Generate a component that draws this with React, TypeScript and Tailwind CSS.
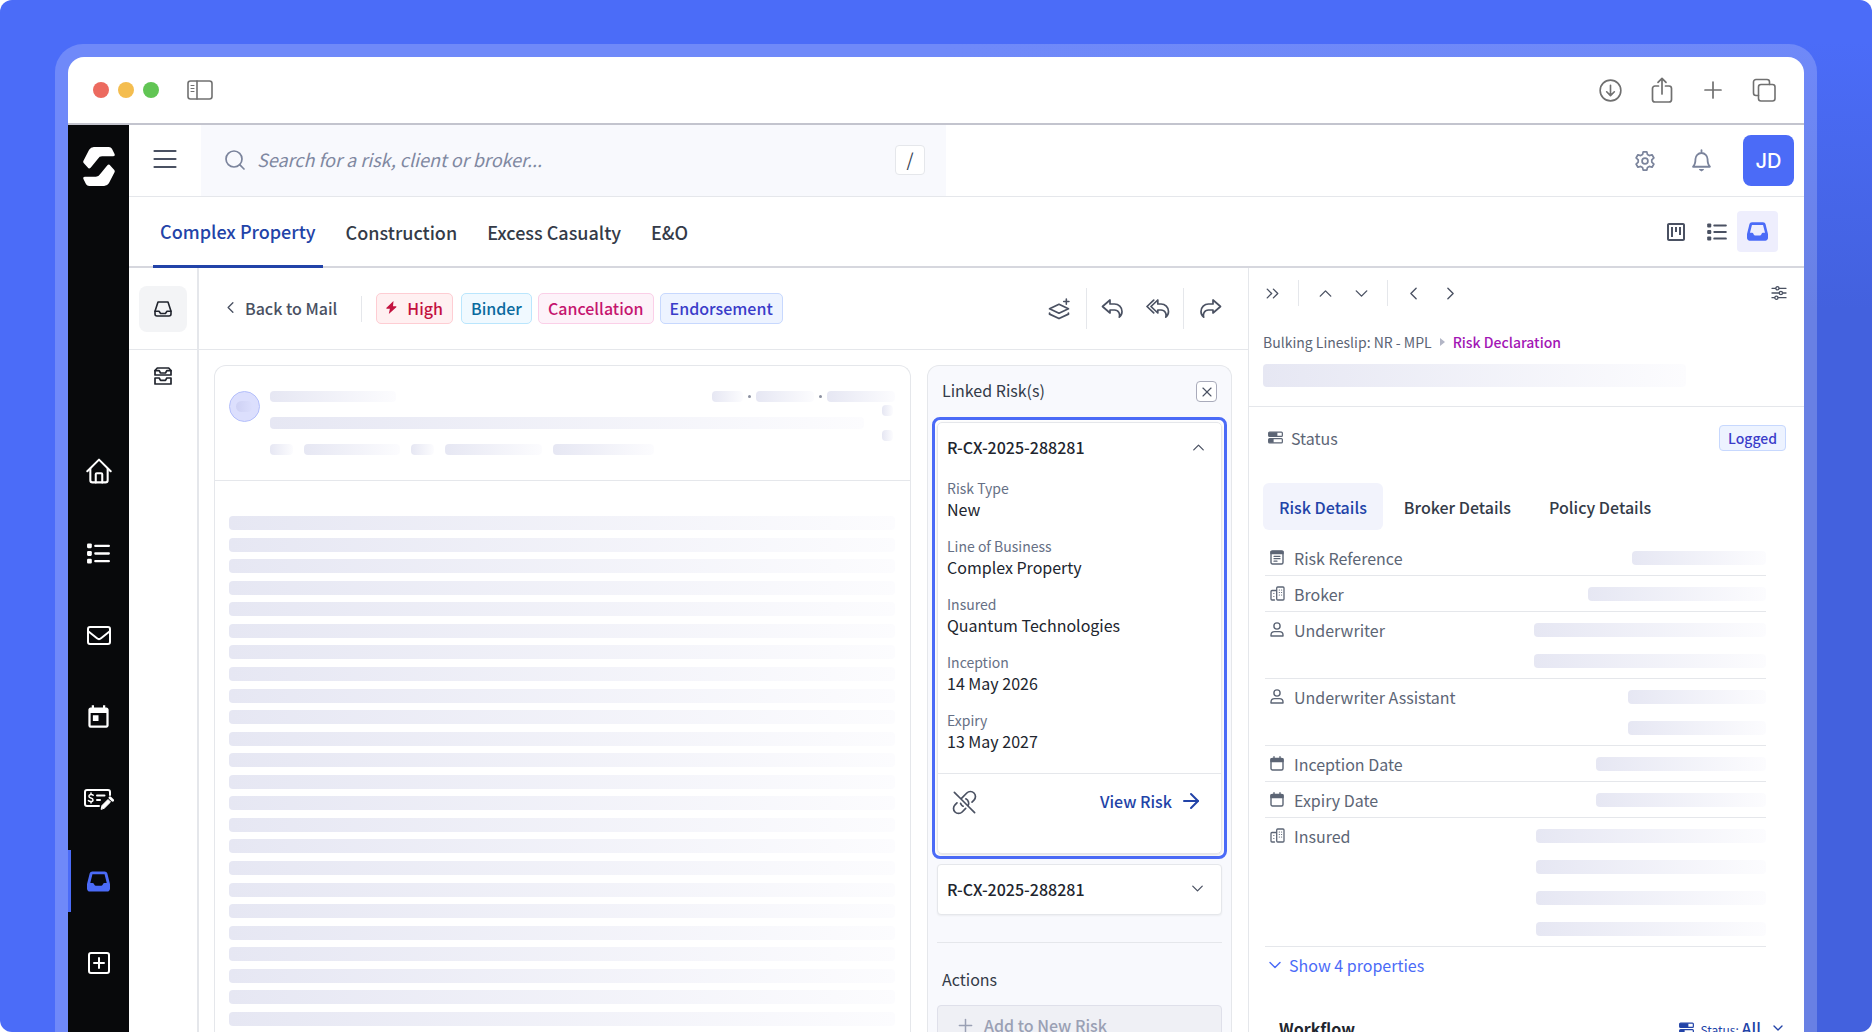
import React from "react";
import type { ReactNode } from "react";
import { FaInbox } from "react-icons/fa6";
import { HiOutlineLinkSlash } from "react-icons/hi2";
import { MdOutlineViewKanban, MdToday } from "react-icons/md";
import {
  ArrowRight,
  ChevronDown,
  ChevronLeft,
  ChevronRight,
  ChevronUp,
  ChevronsRight,
  Plus,
  Search,
  X,
} from "lucide-react";

type IconProps = { className?: string };

function Svg({ className, box = "0 0 24 24", children, sw = 2 }: IconProps & { box?: string; children: ReactNode; sw?: number }) {
  return (
    <svg className={className} viewBox={box} fill="none" stroke="currentColor" strokeWidth={sw} strokeLinecap="round" strokeLinejoin="round" aria-hidden="true">
      {children}
    </svg>
  );
}

const Logo = ({ className }: IconProps) => (
  <svg className={className} viewBox="0 0 94 114" fill="currentColor" aria-hidden="true">
    <path d="M1 41 18 8Q23 0 32 0H76Q82 0 85 5L92 19Q96 27 88 27H56Q48 27 44 34L23 60Q18 66 14 60L2 47Q0 44 1 41Z" />
    <path transform="rotate(180 47 57)" d="M1 41 18 8Q23 0 32 0H76Q82 0 85 5L92 19Q96 27 88 27H56Q48 27 44 34L23 60Q18 66 14 60L2 47Q0 44 1 41Z" />
  </svg>
);

const WindowPanel = ({ className }: IconProps) => (
  <Svg className={className} box="0 0 26 20" sw={1.6}>
    <rect x="1" y="1" width="24" height="18" rx="2.5" />
    <path d="M10 1v18" />
    <path d="M4 5.5h3M4 8.5h3M4 11.5h3" strokeWidth={1.1} />
  </Svg>
);
const DownloadCircle = ({ className }: IconProps) => (
  <Svg className={className} sw={1.7}>
    <circle cx="12" cy="12" r="10.8" />
    <path d="M12 6.5v10.5M8 13.3l4 4 4-4" />
  </Svg>
);
const Share = ({ className }: IconProps) => (
  <Svg className={className} box="0 0 22 26" sw={1.7}>
    <path d="M7.5 9H4a2.5 2.5 0 0 0-2.500 2.500v11A2.500 2.500 0 0 0 4 25h14a2.500 2.500 0 0 0 2.500-2.500v-11A2.500 2.500 0 0 0 18 9h-3.500" />
    <path d="M11 17V1.500M7 5.300l4-4 4 4" />
  </Svg>
);
const Copies = ({ className }: IconProps) => (
  <Svg className={className} sw={1.6}>
    <rect x="6.500" y="6.500" width="16.500" height="16.500" rx="2.500" />
    <path d="M6.500 17.500H4A2.500 2.500 0 0 1 1.500 15V4A2.500 2.500 0 0 1 4 1.500h11A2.500 2.500 0 0 1 17.500 4v2.500" />
  </Svg>
);
const Gear = ({ className }: IconProps) => (
  <Svg className={className} sw={1.9}>
    <circle cx="12" cy="12" r="3.2" />
    <path d="M10 2h4l.7 3 2 1.100 3-.9 2 3.500-2.300 2.100v2.400l2.300 2.100-2 3.500-3-.9-2 1.100-.7 3h-4l-.7-3-2-1.100-3 .9-2-3.500 2.300-2.100v-2.400L2.300 8.700l2-3.500 3 .9 2-1.100z" />
  </Svg>
);
const BellIcon = ({ className }: IconProps) => (
  <Svg className={className} sw={1.9}>
    <path d="M12 1.200v1.500M3.200 18.500c1.700-1.700 2.500-3.400 2.500-8a6.300 6.300 0 0 1 12.600 0c0 4.600.8 6.300 2.500 8z" />
    <path d="M10 21.500h4l-2 1.300z" fill="currentColor" strokeWidth={1.200} />
  </Svg>
);
const Home = ({ className }: IconProps) => (
  <Svg className={className} sw={1.9}>
    <path d="M1.200 12.200 12 1.500l10.800 10.700" />
    <path d="M4 10v10.500A2 2 0 0 0 6 22.500h12a2 2 0 0 0 2-2V10" />
    <path d="M9 22.500V15a1 1 0 0 1 1-1h4a1 1 0 0 1 1 1v7.500" />
  </Svg>
);
const List = ({ className }: IconProps) => (
  <svg className={className} viewBox="0 0 24 22" fill="currentColor" aria-hidden="true">
    <rect x="0" y="0.5" width="5" height="5" rx="1.2" />
    <rect x="0" y="8.5" width="5" height="5" rx="1.2" />
    <rect x="0" y="16.5" width="5" height="5" rx="1.2" />
    <rect x="7.5" y="1.8" width="16.5" height="2.4" rx="1.1" />
    <rect x="7.5" y="9.8" width="16.5" height="2.4" rx="1.1" />
    <rect x="7.5" y="17.8" width="16.5" height="2.4" rx="1.1" />
  </svg>
);
const Mail = ({ className }: IconProps) => (
  <Svg className={className} box="0 0 24 19">
    <rect x="1" y="1" width="22" height="17" rx="2" />
    <path d="M1.500 5.500 10 12.300a3.200 3.200 0 0 0 4 0l8.500-6.800" />
  </Svg>
);
const CheckPen = ({ className }: IconProps) => (
  <Svg className={className} box="0 0 30 21">
    <path d="M15 17H3a2 2 0 0 1-2-2V3a2 2 0 0 1 2-2h21a2 2 0 0 1 2 2v3" />
    <path d="M13 6.500h7.500M13 11h3" />
    <path d="M9.200 6.300C8.600 5.600 7.800 5.300 7 5.400c-2.800.3-2.700 3-.2 3.500 3 .6 2.900 3.500 0 3.700-1 0-1.900-.4-2.400-1.100M7 4v1M7 12.800V14" strokeWidth={1.5} />
    <path d="m17.200 20 .8-3.500 6-6 2.500 2.500-6 6z" fill="currentColor" strokeWidth={1} />
    <path d="m26 8.800 2.600 2.500" strokeWidth={2.8} />
  </Svg>
);
const PlusBox = ({ className }: IconProps) => (
  <Svg className={className}>
    <rect x="2" y="2" width="20" height="20" rx="2" />
    <path d="M12 7v10M7 12h10" />
  </Svg>
);
const Tray = ({ className }: IconProps) => (
  <Svg className={className} box="0 0 18 16" sw={1.6}>
    <path d="M4 1h10l3 9.300V13a2 2 0 0 1-2 2H3a2 2 0 0 1-2-2v-2.700z" />
    <path d="M1 10.200h4l1.600 2.300h4.800L13 10.200h4" />
  </Svg>
);
const Trays = ({ className }: IconProps) => (
  <Svg className={className} box="0 0 18 18" sw={1.7}>
    <path d="M3.300 1h11.400L17 3.500V8H1V3.500z" />
    <path d="M1 3.700h4.200l1.300 2.300h5l1.300-2.300H17" />
    <path d="M1 11h4.200l1.300 2.300h5l1.300-2.300H17v6H1z" />
  </Svg>
);
const Bolt = ({ className }: IconProps) => (
  <svg className={className} viewBox="0 0 11 13" fill="currentColor" aria-hidden="true">
    <path d="M7.500 0 .5 6.800a.6.600 0 0 0 .4 1h3L2.800 13l7.500-6.800a.6.600 0 0 0-.4-1H7z" />
  </svg>
);
const LayersPlus = ({ className }: IconProps) => (
  <Svg className={className} box="0 0 21 21" sw={1.7}>
    <path d="M10.500 6 19.500 10.300l-9 4.200-9-4.200z" />
    <path d="M1.500 14.500v.9l9 4.200 9-4.200v-.9" />
    <path d="M17.500 0.900v5M15 3.400h5" strokeWidth={1.5} />
  </Svg>
);
const Reply = ({ className }: IconProps) => (
  <Svg className={className} box="0 0 22 20" sw={1.7}>
    <path d="M1 7.500 8.500 1v4h4.500a7.500 7.500 0 0 1 7.500 7.500c0 2.800-1.300 4.600-2.700 5.700.9-3.200-.6-7.200-4.800-7.200H8.500v3z" />
  </Svg>
);
const ReplyAll = ({ className }: IconProps) => (
  <Svg className={className} box="0 0 24 20" sw={1.7}>
    <path d="M5 7.500 11.800 1v4H15a7.500 7.500 0 0 1 7.500 7.500c0 2.800-1.300 4.600-2.700 5.700.9-3.200-.6-7.200-4.800-7.200h-3.200v3z" />
    <path d="M7.700 1.200 1 7.500l6.700 6.300" />
  </Svg>
);
const Sliders = ({ className }: IconProps) => (
  <Svg className={className} box="0 0 16 14" sw={1.3}>
    <path d="M1 2.300h3.500M8.300 2.300H15M1 7h7M11.800 7H15M1 11.700h2.500M7.300 11.700H15" />
    <circle cx="6.400" cy="2.300" r="1.600" />
    <circle cx="9.900" cy="7" r="1.600" />
    <circle cx="5.400" cy="11.700" r="1.600" />
  </Svg>
);
const StatusBars = ({ className }: IconProps) => (
  <svg className={className} viewBox="0 0 16 13" aria-hidden="true">
    <g fill="none" stroke="currentColor" strokeWidth="1.3">
      <rect x="0.7" y="0.7" width="14.6" height="4.6" rx="1" />
      <rect x="0.7" y="7.700" width="14.6" height="4.6" rx="1" />
    </g>
    <path d="M1 1h9v4H1zM1 8h5v4H1z" fill="currentColor" />
  </svg>
);
const Doc = ({ className }: IconProps) => (
  <Svg className={className} box="0 0 14 15" sw={1.4}>
    <rect x="1" y="1" width="12" height="13" rx="1.5" />
    <path d="M1 1.500h12v2H1z" fill="currentColor" />
    <path d="M4 6.300h6M4 8.700h6M4 11.200h3" strokeWidth={1.2} />
  </Svg>
);
const CalendarSmall = ({ className }: IconProps) => (
  <Svg className={className} box="0 0 14 15" sw={1.4}>
    <rect x="1" y="2.500" width="12" height="11.500" rx="1.5" />
    <path d="M1 3h12v2.500H1z" fill="currentColor" />
    <path d="M4 .8v2M10 .8v2" />
  </Svg>
);
const Buildings = ({ className }: IconProps) => (
  <Svg className={className} box="0 0 15 15" sw={1.3}>
    <path d="M6 4.500H2a1 1 0 0 0-1 1V13a1 1 0 0 0 1 1h2.500" />
    <rect x="6.700" y="1" width="7.300" height="13" rx="1" />
    <path d="M9.300 4h.1M11.500 4h.1M9.300 6.500h.1M11.500 6.500h.1M9.300 9h.1M11.500 9h.1M3.800 7.500h.1M3.800 10.500h.1" strokeWidth={1.2} />
  </Svg>
);
const Person = ({ className }: IconProps) => (
  <Svg className={className} box="0 0 14 15" sw={1.4}>
    <circle cx="7" cy="4" r="3.100" />
    <path d="M1 14v-.9C1 11 2.600 9.600 4.600 9.600h4.800c2 0 3.600 1.400 3.600 3.500v.9z" />
  </Svg>
);

const Bar = ({ className = "" }: { className?: string }) => (
  <div className={`rounded-sm bg-linear-to-r from-[#e6e7f3] to-[#fcfcfe] ${className}`} />
);

const sideNav = [
  { label: "Home", icon: <Home className="size-[26px]" /> },
  { label: "Lists", icon: <List className="h-[21px] w-[23px]" /> },
  { label: "Mail", icon: <Mail className="h-[19px] w-6" /> },
  { label: "Calendar", icon: <MdToday className="size-[27px]" /> },
  { label: "Quotes", icon: <CheckPen className="h-[21px] w-[30px]" /> },
  { label: "Inbox", icon: <FaInbox className="size-[23px]" />, active: true },
  { label: "Add", icon: <PlusBox className="size-6" /> },
];

const fields = [
  ["Risk Type", "New"],
  ["Line of Business", "Complex Property"],
  ["Insured", "Quantum Technologies"],
  ["Inception", "14 May 2026"],
  ["Expiry", "13 May 2027"],
];

const smallIcon = "h-[15px] w-3.5";
const details = [
  { label: "Risk Reference", icon: <Doc className={smallIcon} />, rows: 1, width: "w-[134px]" },
  { label: "Broker", icon: <Buildings className="size-[15px]" />, rows: 1, width: "w-[178px]" },
  { label: "Underwriter", icon: <Person className={smallIcon} />, rows: 2, width: "w-[232px]" },
  { label: "Underwriter Assistant", icon: <Person className={smallIcon} />, rows: 2, width: "w-[138px]" },
  { label: "Inception Date", icon: <CalendarSmall className={smallIcon} />, rows: 1, width: "w-[170px]" },
  { label: "Expiry Date", icon: <CalendarSmall className={smallIcon} />, rows: 1, width: "w-[170px]" },
  { label: "Insured", icon: <Buildings className="size-[15px]" />, rows: 4, width: "w-[230px]" },
];

function TitleBar() {
  const action = "flex size-[51px] items-center justify-center";
  return (
    <div className="flex h-[68px] shrink-0 items-center border-b-2 border-[#c3c4ce] pr-[15px] pl-[25px] text-[#707070]">
      <div className="flex gap-[9px]">
        <span className="size-4 rounded-full bg-[#ec6a5f]" />
        <span className="size-4 rounded-full bg-[#f4bd4f]" />
        <span className="size-4 rounded-full bg-[#61c554]" />
      </div>
      <button type="button" aria-label="Toggle panel" className="ml-7">
        <WindowPanel className="h-5 w-[26px]" />
      </button>
      <div className="ml-auto flex items-center">
        <button type="button" aria-label="Downloads" className={action}><DownloadCircle className="size-[23px]" /></button>
        <button type="button" aria-label="Share" className={action}><Share className="h-[26px] w-[22px]" /></button>
        <button type="button" aria-label="New window" className={action}><Svg className="size-[18px]" box="0 0 18 18" sw={1.7}><path d="M9 1v16M1 9h16" /></Svg></button>
        <button type="button" aria-label="Windows" className={action}><Copies className="size-6" /></button>
      </div>
    </div>
  );
}

function Sidebar() {
  return (
    <nav aria-label="Main" className="flex w-[61px] shrink-0 flex-col items-center bg-[#08090b] pt-[22px] text-white">
      <Logo className="h-[39px] w-8" />
      <div className="mt-[254px] flex w-full flex-col gap-5">
        {sideNav.map((n) => (
          <button
            key={n.label}
            type="button"
            aria-label={n.label}
            className={n.active
              ? "flex h-[62px] items-center justify-center border-l-[3px] border-[#4b6bf7] pr-[3px] text-[#4b6bf7]"
              : "flex h-[62px] items-center justify-center"}
          >
            {n.icon}
          </button>
        ))}
      </div>
    </nav>
  );
}

function Header() {
  return (
    <header className="flex h-[72px] shrink-0 items-stretch border-b border-gray-200">
      <button type="button" aria-label="Menu" className="flex w-[72px] items-center justify-center pb-1 text-[#4a5162]">
        <Svg className="h-5 w-6" box="0 0 24 20" sw={2.2}><path d="M1.500 2h21M1.500 10h21M1.500 18h21" /></Svg>
      </button>
      <label className="flex w-[745px] items-center bg-[#f8f9fd] pr-[21px] pb-0.5 pl-[22px]">
        <Search className="size-6 text-[#7b849c]" strokeWidth={1.7} />
        <input
          type="text"
          aria-label="Search"
          placeholder="Search for a risk, client or broker..."
          className="ml-2.5 min-w-0 flex-1 bg-transparent pb-0.5 text-lg italic placeholder:text-[#7f88a1] focus:outline-none"
        />
        <kbd className="flex size-[30px] items-center justify-center rounded border border-gray-200 bg-white pb-0.5 font-[inherit] text-lg text-gray-700">/</kbd>
      </label>
      <div className="ml-auto flex items-center pr-2.5">
        <button type="button" aria-label="Settings" className="text-[#7b849c]"><Gear className="size-[22px]" /></button>
        <button type="button" aria-label="Notifications" className="ml-[34px] text-[#7b849c]"><BellIcon className="size-[23px]" /></button>
        <button type="button" className="ml-[30px] flex size-[51px] items-center justify-center rounded-lg bg-[#4b6bf7] font-['Inter',sans-serif] text-xl font-medium text-white">JD</button>
      </div>
    </header>
  );
}

function TabsRow() {
  return (
    <div className="flex h-[71px] shrink-0 items-stretch border-b-2 border-[#d6d7de] pr-[26px] pl-6">
      <div role="tablist" className="flex gap-4 text-lg font-medium text-[#343b48]">
        <button type="button" role="tab" aria-selected="true" className="-mb-0.5 border-b-[3px] border-[#2243a8] px-[7px] text-[#2243a8]">Complex Property</button>
        <button type="button" role="tab" aria-selected="false" className="px-[7px]">Construction</button>
        <button type="button" role="tab" aria-selected="false" className="px-[7px]">Excess Casualty</button>
        <button type="button" role="tab" aria-selected="false" className="px-[7px]">E&amp;O</button>
      </div>
      <div className="ml-auto flex items-center text-[#4a5162]">
        <button type="button" aria-label="Board view" className="flex size-[41px] items-center justify-center"><MdOutlineViewKanban className="size-6" /></button>
        <button type="button" aria-label="List view" className="flex size-[41px] items-center justify-center"><List className="h-[18px] w-5" /></button>
        <button type="button" aria-label="Inbox view" className="flex size-[41px] items-center justify-center rounded-sm bg-[#eeeefd] text-[#4b6bf7]"><FaInbox className="size-[21px]" /></button>
      </div>
    </div>
  );
}

function MailToolbar() {
  const tag = "flex h-[31px] items-center rounded-[5px] border px-[9px] pb-0.5";
  return (
    <div className="flex h-[82px] items-center border-b border-gray-200 pr-[26px] pl-[22px] text-base text-[#4a5162]">
      <button type="button" className="flex items-center gap-[5px] pb-0.5 font-medium"><ChevronLeft className="size-[19px]" strokeWidth={1.7} />Back to Mail</button>
      <span className="ml-6 h-[26px] w-px bg-gray-200" />
      <div className="ml-3.5 flex gap-2 font-medium">
        <span className={`${tag} gap-2.5 border-[#fecdd3] bg-[#fff0f1] text-[#c3123f]`}><Bolt className="h-[13px] w-[11px]" />High</span>
        <span className={`${tag} border-[#bae6fd] bg-[#f0f9ff] text-[#0a6a9e]`}>Binder</span>
        <span className={`${tag} -ml-0.5 border-[#fbcfe8] bg-[#fdf2f9] text-[#c5156f]`}>Cancellation</span>
        <span className={`${tag} -ml-0.5 border-[#c7d8fe] bg-[#edf3ff] text-[#3a3cc9]`}>Endorsement</span>
      </div>
      <div className="ml-auto flex items-center">
        <button type="button" aria-label="Add to stack"><LayersPlus className="size-[22px]" /></button>
        <span className="ml-4 h-[41px] w-px bg-gray-200" />
        <button type="button" aria-label="Reply" className="ml-3.5"><Reply className="h-5 w-[23px]" /></button>
        <button type="button" aria-label="Reply all" className="ml-[22px]"><ReplyAll className="h-5 w-6" /></button>
        <span className="ml-[13px] h-[41px] w-px bg-gray-200" />
        <button type="button" aria-label="Forward" className="ml-[15px]"><Reply className="h-5 w-[23px] -scale-x-100" /></button>
      </div>
    </div>
  );
}

function EmailCard() {
  return (
    <article className="flex min-w-0 flex-1 flex-col rounded-t-xl border border-b-0 border-gray-200">
      <div className="flex h-[115px] shrink-0 gap-2.5 border-b border-gray-200 pt-[25px] pr-[15px] pl-3.5">
        <div className="flex size-[31px] items-center justify-center rounded-full border border-[#b4bffb] bg-[#dcdffd]">
          <span className="h-[11px] w-[17px] rounded-md bg-linear-to-r from-[#ced1f4] to-[#dcdffd]" />
        </div>
        <div className="flex-1">
          <div className="flex items-center">
            <Bar className="h-[11px] w-[126px]" />
            <div className="ml-auto flex items-center gap-[5px]">
              <Bar className="h-[11px] w-[31px]" />
              <span className="size-[3px] rounded-full bg-[#8b90a0]" />
              <Bar className="h-[11px] w-[58px]" />
              <span className="size-[3px] rounded-full bg-[#8b90a0]" />
              <Bar className="h-[11px] w-[68px]" />
            </div>
          </div>
          <div className="flex">
            <div className="flex-1 pt-[15px]">
              <Bar className="h-3" />
              <div className="flex gap-[11px] pt-[15px]">
                <Bar className="h-[11px] w-[23px]" />
                <Bar className="h-[11px] w-24" />
                <Bar className="h-[11px] w-[23px]" />
                <Bar className="h-[11px] w-[97px]" />
                <Bar className="h-[11px] w-[101px]" />
              </div>
            </div>
            <div className="mr-0.5 ml-[18px] flex flex-col gap-3.5 pt-[3px]">
              <Bar className="size-[11px]" />
              <Bar className="size-[11px]" />
            </div>
          </div>
        </div>
      </div>
      <div className="flex flex-1 flex-col justify-between pt-[35px] pr-[15px] pb-1.5 pl-3.5">
        {Array.from({ length: 24 }, (_, i) => <Bar key={i} className="h-3.5" />)}
      </div>
    </article>
  );
}

function LinkedRisks() {
  return (
    <section aria-label="Linked risks" className="w-[305px] shrink-0 overflow-hidden rounded-t-xl border border-b-0 border-gray-200 bg-[#f8f9fd]">
      <div className="flex h-[51px] items-center justify-between pr-3.5 pl-3.5">
        <h2 className="pb-[3px] text-base text-[#343b48]">Linked Risk(s)</h2>
        <button type="button" aria-label="Close" className="flex size-[21px] items-center justify-center rounded border border-[#a9abbb] bg-white text-[#4a5162]"><X className="size-4" strokeWidth={1.7} /></button>
      </div>
      <div className="mx-1 rounded-lg border-[3px] border-[#4b6bf7] bg-white p-0.5">
        <div className="rounded-[5px] border border-gray-200 shadow-sm">
          <h3>
            <button type="button" aria-expanded="true" className="flex h-12 w-full items-center justify-between pr-[13px] pl-[9px] text-base font-medium text-[#21252e]">
              R-CX-2025-288281
              <ChevronUp className="size-[19px] text-[#4a5162]" strokeWidth={1.6} />
            </button>
          </h3>
          <dl className="flex flex-col gap-4 px-[9px] pt-[7px] pb-[21px]">
            {fields.map(([k, v]) => (
              <div key={k}>
                <dt className="text-sm leading-5 text-[#667085]">{k}</dt>
                <dd className="text-base leading-[22px] text-[#21252e]">{v}</dd>
              </div>
            ))}
          </dl>
          <div className="flex h-20 items-start justify-between border-t border-gray-200 pt-[15px] pr-[18px] pl-[13px]">
            <button type="button" aria-label="Unlink risk" className="text-[#4a5162]"><HiOutlineLinkSlash className="size-[27px]" /></button>
            <a href="#risk" className="flex items-center gap-[7px] text-base font-medium text-[#2243a8]">View Risk<ArrowRight className="size-6" strokeWidth={2} /></a>
          </div>
        </div>
      </div>
      <button type="button" aria-expanded="false" className="mx-[9px] mt-[5px] flex h-[51px] w-[285px] items-center justify-between rounded border border-gray-200 bg-white pr-3.5 pb-0.5 pl-[9px] text-base font-medium text-[#21252e] shadow-xs">
        R-CX-2025-288281
        <ChevronDown className="size-[19px] text-[#4a5162]" strokeWidth={1.6} />
      </button>
      <hr className="mx-[9px] mt-[27px] border-gray-200" />
      <h2 className="mt-6 pl-3.5 text-base text-[#343b48]">Actions</h2>
      <button type="button" className="mx-[9px] mt-3.5 flex h-[42px] w-[285px] items-center gap-2 rounded border border-[#dfe0ea] bg-[#eff0f5] pb-0.5 pl-[17px] text-base font-medium text-[#9aa0b4]">
        <Plus className="size-[21px]" strokeWidth={1.7} />
        Add to New Risk
      </button>
    </section>
  );
}

function RiskPanel() {
  const icon = "size-[21px]";
  return (
    <aside className="w-[556px] shrink-0 border-l border-gray-200 text-base text-[#5c6575]">
      <div className="flex h-[50px] items-center pr-[17px] pl-[13px] text-[#4a5162]">
        <button type="button" aria-label="Collapse"><ChevronsRight className={icon} strokeWidth={1.6} /></button>
        <span className="ml-[15px] h-[26px] w-px bg-gray-200" />
        <button type="button" aria-label="Previous" className="ml-4"><ChevronUp className={icon} strokeWidth={1.6} /></button>
        <button type="button" aria-label="Next" className="ml-[15px]"><ChevronDown className={icon} strokeWidth={1.6} /></button>
        <span className="ml-[15px] h-[26px] w-px bg-gray-200" />
        <button type="button" aria-label="Back" className="ml-[15px]"><ChevronLeft className={icon} strokeWidth={1.6} /></button>
        <button type="button" aria-label="Forward" className="ml-4"><ChevronRight className={icon} strokeWidth={1.6} /></button>
        <button type="button" aria-label="Filters" className="ml-auto"><Sliders className="h-3.5 w-4" /></button>
      </div>
      <div className="border-b border-gray-200 px-3.5 pt-3.5 pb-[19px]">
        <div className="flex items-center gap-2 text-sm leading-5">
          <span>Bulking Lineslip: NR - MPL</span>
          <svg className="h-2 w-[5px] text-[#b3b6c6]" viewBox="0 0 5 8" fill="currentColor" aria-hidden="true"><path d="M0 0 5 4 0 8z" /></svg>
          <span className="font-medium text-[#a316b5]">Risk Declaration</span>
        </div>
        <Bar className="mt-3 h-[23px] w-[423px]" />
      </div>
      <div className="flex h-[61px] items-center justify-between pr-[18px] pl-[19px]">
        <span className="flex items-center gap-2"><StatusBars className="h-[13px] w-[15px]" />Status</span>
        <span className="flex h-[26px] items-center rounded border border-[#c7d8fe] bg-[#edf3ff] px-2 text-sm font-medium text-[#3a3cc9]">Logged</span>
      </div>
      <div role="tablist" className="mt-[15px] flex px-3.5 font-medium text-[#343b48]">
        <button type="button" role="tab" aria-selected="true" className="h-[47px] rounded-md bg-[#f2f3fc] px-4 text-[#2243a8]">Risk Details</button>
        <button type="button" role="tab" aria-selected="false" className="h-[47px] px-[21px]">Broker Details</button>
        <button type="button" role="tab" aria-selected="false" className="h-[47px] px-[17px]">Policy Details</button>
      </div>
      <dl className="mt-2.5 mr-[38px] ml-4">
        {details.map((d) => (
          <div key={d.label} className="flex justify-between border-b border-gray-200">
            <dt className="flex h-[35px] items-center"><span className="mr-[5px] flex w-6 justify-center">{d.icon}</span>{d.label}</dt>
            <dd className="flex flex-col gap-[17px] pt-[11px] pb-[10px]">
              {Array.from({ length: d.rows }, (_, i) => <Bar key={i} className={`h-3.5 ${d.width}`} />)}
            </dd>
          </div>
        ))}
      </dl>
      <button type="button" className="mt-1.5 ml-4 flex items-center gap-1 leading-6 text-[#4b6bf7]"><ChevronDown className="size-5" strokeWidth={1.7} />Show 4 properties</button>
      <div className="mt-[39px] flex items-center justify-between pr-[18px] pl-[30px]">
        <h2 className="font-bold leading-6 text-[#21252e]">Workflow</h2>
        <button type="button" className="flex items-center gap-1.5 text-[#2243a8]"><StatusBars className="h-[13px] w-[15px]" /><span className="text-xs">Status: <b className="text-base font-medium">All</b></span><ChevronDown className="ml-[3px] size-4" /></button>
      </div>
    </aside>
  );
}

export default function App() {
  return (
    <div className="h-screen overflow-hidden bg-white font-['Noto_Sans_CJK_SC','Noto_Sans',sans-serif]">
      <div className="h-full rounded-xl bg-[linear-gradient(to_right,#4b6cf8_50%,transparent_80%),linear-gradient(to_bottom,#4b6cf8_4%,#4361de_30%)] px-[55px] pt-11">
        <div className="h-full rounded-t-[28px] bg-white/20 px-[13px] pt-[13px]">
          <div className="flex h-full flex-col overflow-hidden rounded-t-2xl bg-white">
            <TitleBar />
            <div className="flex min-h-0 flex-1">
              <Sidebar />
              <div className="flex min-w-0 flex-1 flex-col">
                <Header />
                <TabsRow />
                <main className="flex min-h-0 flex-1">
                  <div className="flex w-[70px] shrink-0 flex-col items-center border-r-2 border-gray-200 text-[#21252e]">
                    <div className="flex h-[82px] w-full items-center justify-center border-b border-gray-200">
                      <button type="button" aria-label="Inbox" className="flex h-[46px] w-12 items-center justify-center rounded-lg bg-gray-100"><Tray className="h-4 w-[18px]" /></button>
                    </div>
                    <button type="button" aria-label="All inboxes" className="mt-[17px]"><Trays className="size-[18px]" /></button>
                  </div>
                  <div className="flex min-w-0 flex-1 flex-col">
                    <MailToolbar />
                    <div className="flex min-h-0 flex-1 gap-4 pt-[15px] pr-4 pl-[15px]">
                      <EmailCard />
                      <LinkedRisks />
                    </div>
                  </div>
                  <RiskPanel />
                </main>
              </div>
            </div>
          </div>
        </div>
      </div>
    </div>
  );
}
